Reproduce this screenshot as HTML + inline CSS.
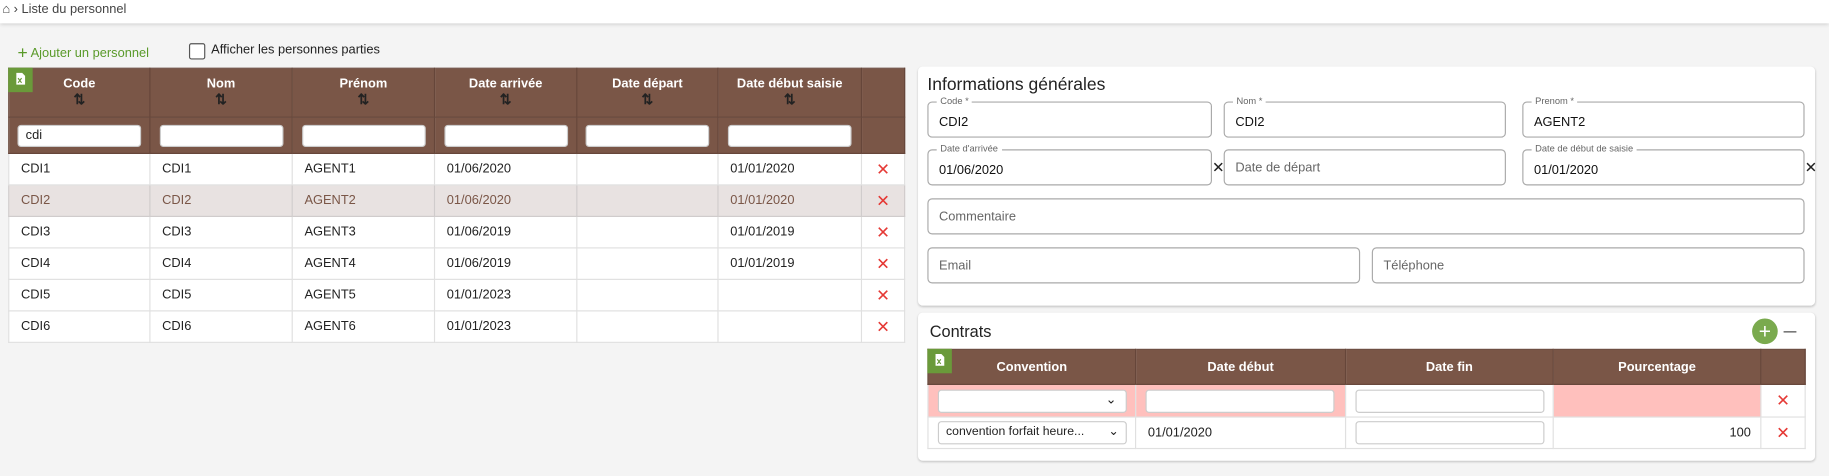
<!DOCTYPE html>
<html><head><meta charset="utf-8"><style>
*{box-sizing:border-box;margin:0;padding:0}
html,body{width:1829px;height:476px;overflow:hidden;background:#f4f4f4}
#w{position:absolute;left:0;top:0;width:1568px;height:408px;transform:scale(1.1665);transform-origin:0 0;font-family:"Liberation Sans",sans-serif;font-size:12px;color:#222}
.abs{position:absolute}
.top{left:0;top:0;width:1568px;height:20px;background:#fff;box-shadow:0 1px 3px rgba(0,0,0,.15)}
table{border-collapse:collapse;position:absolute;table-layout:fixed}
th{background:#7a5647;color:#fff;font-weight:bold;border:1px solid #66463a;font-size:11px;vertical-align:top}
td{border:1px solid #e0e0e0;background:#fff;height:27px;padding-left:10px;font-size:11px}
.sel td{background:#e8e2e1;color:#7a5647;border-color:#d0cccc}
td.x,.sel td.x{color:#e53935;font-size:14px;text-align:center;padding:0}
.fin{background:#fff;border:1px solid #ccc;border-radius:3px;height:19px;margin:0 auto;width:106px;font-weight:normal;color:#222;text-align:left;padding-left:6px;font-size:11px;line-height:17px}
.card{background:#fff;border-radius:4px;box-shadow:0 1px 2px rgba(0,0,0,.2)}
.f{position:absolute;border:1px solid #aaa;border-radius:4px;height:31px;padding:11px 0 0 9px;font-size:11px;color:#111}
.f.p{padding-top:9px;color:#666}
.f span{position:absolute;top:-7px;left:7px;background:#fff;padding:0 3px;font-size:8px;color:#666;line-height:12px}
.cx{position:absolute;font-size:13px;color:#222}
.xl{position:absolute;background:#6a9a3a;width:21px;height:21px}
.xl svg{position:absolute;left:6px;top:4px}
</style></head><body><div id="w">
<div class="abs top"></div>
<div class="abs" style="left:2px;top:2px;font-size:11px;color:#444">⌂ › Liste du personnel</div>
<div class="abs" style="left:15px;top:36px;color:#5a9a2a;font-size:11px"><span style="font-size:15px;position:relative;top:1px">+</span> Ajouter un personnel</div>
<div class="abs" style="left:162px;top:37px;width:14px;height:14px;border:1px solid #555;border-radius:2px;background:#fff"></div>
<div class="abs" style="left:181px;top:37px;font-size:11px">Afficher les personnes parties</div>

<table style="left:7px;top:58px;width:768px">
<colgroup><col style="width:121px"><col style="width:122px"><col style="width:122px"><col style="width:122px"><col style="width:121px"><col style="width:123px"><col style="width:37px"></colgroup>
<tr style="height:42px"><th style="padding-top:7px">Code<br><span style="color:#222;font-size:12px">⇅</span></th><th style="padding-top:7px">Nom<br><span style="color:#222;font-size:12px">⇅</span></th><th style="padding-top:7px">Prénom<br><span style="color:#222;font-size:12px">⇅</span></th><th style="padding-top:7px">Date arrivée<br><span style="color:#222;font-size:12px">⇅</span></th><th style="padding-top:7px">Date départ<br><span style="color:#222;font-size:12px">⇅</span></th><th style="padding-top:7px">Date début saisie<br><span style="color:#222;font-size:12px">⇅</span></th><th></th></tr>
<tr style="height:31px"><th style="vertical-align:middle"><div class="fin">cdi</div></th><th style="vertical-align:middle"><div class="fin"></div></th><th style="vertical-align:middle"><div class="fin"></div></th><th style="vertical-align:middle"><div class="fin"></div></th><th style="vertical-align:middle"><div class="fin"></div></th><th style="vertical-align:middle"><div class="fin"></div></th><th></th></tr>
<tr><td>CDI1</td><td>CDI1</td><td>AGENT1</td><td>01/06/2020</td><td></td><td>01/01/2020</td><td class="x">✕</td></tr>
<tr class="sel"><td>CDI2</td><td>CDI2</td><td>AGENT2</td><td>01/06/2020</td><td></td><td>01/01/2020</td><td class="x">✕</td></tr>
<tr><td>CDI3</td><td>CDI3</td><td>AGENT3</td><td>01/06/2019</td><td></td><td>01/01/2019</td><td class="x">✕</td></tr>
<tr><td>CDI4</td><td>CDI4</td><td>AGENT4</td><td>01/06/2019</td><td></td><td>01/01/2019</td><td class="x">✕</td></tr>
<tr><td>CDI5</td><td>CDI5</td><td>AGENT5</td><td>01/01/2023</td><td></td><td></td><td class="x">✕</td></tr>
<tr><td>CDI6</td><td>CDI6</td><td>AGENT6</td><td>01/01/2023</td><td></td><td></td><td class="x">✕</td></tr>
</table>
<div class="xl" style="left:7px;top:58px"><svg width="9" height="11" viewBox="0 0 9 11"><path d="M1 .5h5l2.5 2.5v7.5h-7.5z" fill="#fff"/><path d="M2.5 5l3 4M5.5 5l-3 4" stroke="#6a9a3a" stroke-width="1"/></svg></div>

<div class="abs card" style="left:787px;top:57px;width:769px;height:205px"></div>
<div class="abs" style="left:795px;top:64px;font-size:15px;color:#222">Informations générales</div>
<div class="f" style="left:795px;top:87px;width:244px"><span>Code *</span>CDI2</div>
<div class="f" style="left:1049px;top:87px;width:242px"><span>Nom *</span>CDI2</div>
<div class="f" style="left:1305px;top:87px;width:242px"><span>Prenom *</span>AGENT2</div>
<div class="f" style="left:795px;top:128px;width:244px"><span>Date d'arrivée</span>01/06/2020</div>
<div class="cx" style="left:1039px;top:136px">✕</div>
<div class="f p" style="left:1049px;top:128px;width:242px">Date de départ</div>
<div class="f" style="left:1305px;top:128px;width:242px"><span>Date de début de saisie</span>01/01/2020</div>
<div class="cx" style="left:1547px;top:136px">✕</div>
<div class="f p" style="left:795px;top:170px;width:752px">Commentaire</div>
<div class="f p" style="left:795px;top:212px;width:371px">Email</div>
<div class="f p" style="left:1176px;top:212px;width:371px">Téléphone</div>

<div class="abs card" style="left:787px;top:268px;width:769px;height:127px"></div>
<div class="abs" style="left:797px;top:276px;font-size:14px;color:#222">Contrats</div>
<div class="abs" style="left:1502px;top:273px;width:22px;height:22px;border-radius:50%;background:#7aaa4e;color:#fff;text-align:center;line-height:22px;font-size:18px">+</div>
<div class="abs" style="left:1529px;top:284px;width:11px;height:1px;background:#444"></div>
<table style="left:795px;top:299px;width:752px">
<colgroup><col style="width:178px"><col style="width:180px"><col style="width:178px"><col style="width:178px"><col style="width:38px"></colgroup>
<tr style="height:30px"><th style="vertical-align:middle">Convention</th><th style="vertical-align:middle">Date début</th><th style="vertical-align:middle">Date fin</th><th style="vertical-align:middle">Pourcentage</th><th></th></tr>
<tr style="height:28px"><td style="background:#ffc0bd;padding-left:8px"><div class="fin" style="width:162px;margin:0;height:20px;text-align:right;padding-right:8px">⌄</div></td><td style="background:#ffc0bd;padding-left:8px"><div class="fin" style="width:162px;margin:0;height:20px"></div></td><td style="padding-left:8px"><div class="fin" style="width:162px;margin:0;height:20px"></div></td><td style="background:#ffc0bd"></td><td class="x">✕</td></tr>
<tr style="height:27px"><td style="padding-left:8px"><div class="fin" style="width:162px;margin:0;height:20px;font-size:10.5px">convention forfait heure... <span style="float:right;margin-right:6px">⌄</span></div></td><td>01/01/2020</td><td style="padding-left:8px"><div class="fin" style="width:162px;margin:0;height:20px"></div></td><td style="text-align:right;padding-right:8px">100</td><td class="x">✕</td></tr>
</table>
<div class="xl" style="left:795px;top:299px"><svg width="9" height="11" viewBox="0 0 9 11"><path d="M1 .5h5l2.5 2.5v7.5h-7.5z" fill="#fff"/><path d="M2.5 5l3 4M5.5 5l-3 4" stroke="#6a9a3a" stroke-width="1"/></svg></div>
</div></body></html>
